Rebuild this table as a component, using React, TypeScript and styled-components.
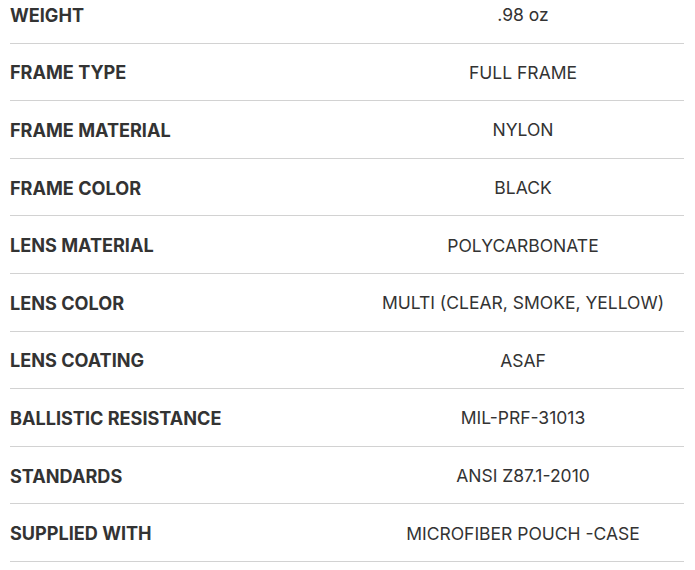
import React from "react";
import styled, { createGlobalStyle } from "styled-components";

const Global = createGlobalStyle`
  html, body { margin: 0; padding: 0; background: #fff; }
  body { font-family: "Inter", "Liberation Sans", sans-serif; color: #333; }
`;

const Table = styled.div`
  margin: -14px 10px 0 10px;
  width: 674px;
  display: flex;
  flex-direction: column;
`;

const Row = styled.div`
  display: grid;
  grid-template-columns: 352px 1fr;
  align-items: center;
  height: 57.6px;
  box-sizing: border-box;
  border-bottom: 1px solid #d2d2d2;
`;

const Label = styled.div`
  font-size: 18.1px;
  font-weight: 700;
  color: #333;
  padding-top: 1px;
`;

const Value = styled.div`
  font-size: 17.5px;
  font-weight: 400;
  text-align: center;
  color: #333;
  padding-top: 1px;
`;

const rows: [string, string][] = [
  ["WEIGHT", ".98 oz"],
  ["FRAME TYPE", "FULL FRAME"],
  ["FRAME MATERIAL", "NYLON"],
  ["FRAME COLOR", "BLACK"],
  ["LENS MATERIAL", "POLYCARBONATE"],
  ["LENS COLOR", "MULTI (CLEAR, SMOKE, YELLOW)"],
  ["LENS COATING", "ASAF"],
  ["BALLISTIC RESISTANCE", "MIL-PRF-31013"],
  ["STANDARDS", "ANSI Z87.1-2010"],
  ["SUPPLIED WITH", "MICROFIBER POUCH -CASE"],
];

export default function App() {
  return (
    <>
      <Global />
      <Table>
        {rows.map(([k, v]) => (
          <Row key={k}>
            <Label>{k}</Label>
            <Value>{v}</Value>
          </Row>
        ))}
      </Table>
    </>
  );
}
